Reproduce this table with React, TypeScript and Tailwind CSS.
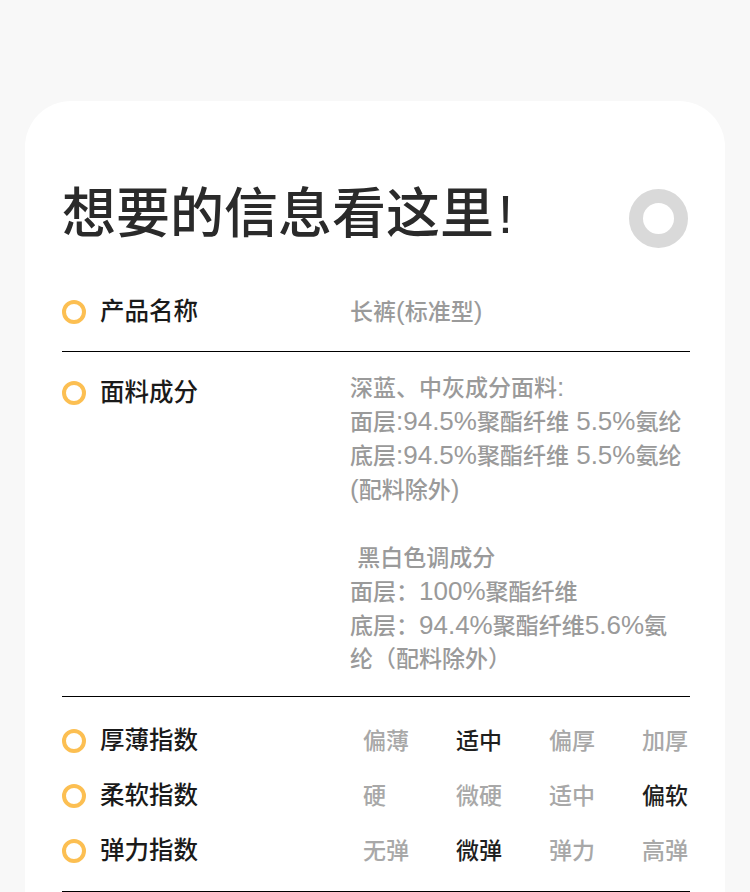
const cjk = { fontFamily: '"Liberation Sans", "Noto Sans CJK SC", "Noto Sans", sans-serif' };

// Latin runs are set a little larger than the CJK ones, as in the design
const Mixed = ({ text }: { text: string }) => (
  <>
    {text.split(/([\x20-\x7e]+)/).map((part, i) =>
      /^[\x20-\x7e]+$/.test(part) ? (
        <span key={i} className="text-[26px]">{part}</span>
      ) : (
        <span key={i}>{part}</span>
      )
    )}
  </>
);

const Dot = () => (
  <span className="box-border inline-block h-6 w-6 shrink-0 rounded-full border-[4px] border-[#fcbf52]" />
);

const Label = ({ text, className = "" }: { text: string; className?: string }) => (
  <div className={`flex w-[288px] shrink-0 items-center gap-[14px] ${className}`}>
    <Dot />
    <span className="text-[24.5px] font-medium leading-[34px] text-[#1a1a1a]">{text}</span>
  </div>
);

const indexes = [
  { name: "厚薄指数", options: ["偏薄", "适中", "偏厚", "加厚"], active: 1 },
  { name: "柔软指数", options: ["硬", "微硬", "适中", "偏软"], active: 3 },
  { name: "弹力指数", options: ["无弹", "微弹", "弹力", "高弹"], active: 1 },
];

const fabric = [
  "深蓝、中灰成分面料:",
  "面层:94.5%聚酯纤维 5.5%氨纶",
  "底层:94.5%聚酯纤维 5.5%氨纶",
  "(配料除外)",
  "\u00a0",
  " 黑白色调成分",
  "面层：100%聚酯纤维",
  "底层：94.4%聚酯纤维5.6%氨",
  "纶（配料除外）",
];

export default function App() {
  return (
    <div className="min-h-[892px] bg-[#f8f8f8] px-[25px] pt-[101px]" style={cjk}>
      <div className="min-h-[800px] rounded-t-[46px] bg-white pl-[37px] pr-[35px] pt-[85px]">
        {/* Title */}
        <div className="flex h-[56px] items-start justify-between">
          <h1 className="text-[54px] font-medium leading-[56px] text-[#2a2a2a]">
            想要的信息看这里<span className="ml-[4px] font-normal">!</span>
          </h1>
          <span className="mr-[2px] mt-[3px] box-border inline-block h-[59px] w-[59px] shrink-0 rounded-full border-[14px] border-[#d9d9d9]" />
        </div>

        {/* Product name */}
        <div className="flex items-center border-b border-black pb-[22px] pt-[52px]">
          <Label text="产品名称" />
          <span className="text-[23px] font-medium leading-[34px] text-[#9a9a9a]">
            <Mixed text="长裤(标准型)" />
          </span>
        </div>

        {/* Fabric */}
        <div className="flex items-start border-b border-black pb-[20px] pt-[18px]">
          <Label text="面料成分" className="mt-[6px]" />
          <div className="text-[23px] font-medium leading-[34px] text-[#9a9a9a]">
            {fabric.map((line, i) => (
              <div key={i} className="h-[34px] whitespace-pre">
                <Mixed text={line} />
              </div>
            ))}
          </div>
        </div>

        {/* Indexes */}
        <div className="border-b border-black pb-[13px] pt-[16px]">
          {indexes.map((row) => (
            <div key={row.name} className="flex h-[55px] items-center">
              <Label text={row.name} />
              <div className="flex pl-[13px]">
                {row.options.map((opt, i) => (
                  <span
                    key={opt}
                    className={`w-[93px] text-[23px] font-medium leading-[34px] ${
                      i === row.active ? "text-[#1f1f1f]" : "text-[#a8a8a8]"
                    }`}
                  >
                    {opt}
                  </span>
                ))}
              </div>
            </div>
          ))}
        </div>
      </div>
    </div>
  );
}
